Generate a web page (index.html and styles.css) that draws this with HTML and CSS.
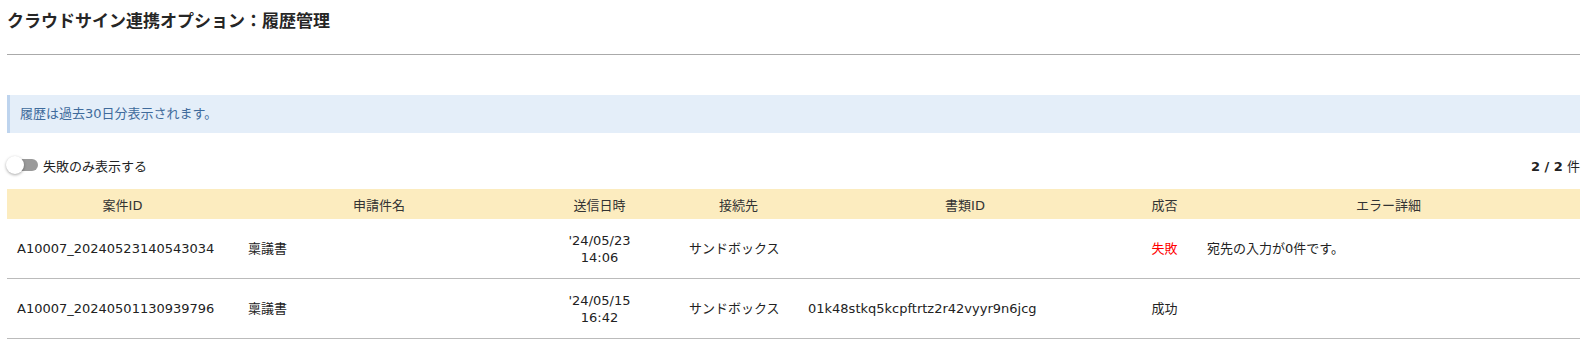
FILE: index.html
```html
<!DOCTYPE html>
<html lang="ja">
<head>
  <meta charset="UTF-8">
  <meta name="viewport" content="width=device-width, initial-scale=1.0">
  <title>履歴管理</title>
  <link rel="stylesheet" href="styles.css">
</head>
<body>
  <h1 class="page-title">クラウドサイン連携オプション：履歴管理</h1>
  <hr class="title-rule">

  <div class="info">履歴は過去30日分表示されます。</div>

  <div class="toolbar">
    <label class="toggle">
      <span class="switch"><span class="knob"></span></span>
      失敗のみ表示する
    </label>
    <div class="count"><b>2 / 2</b> 件</div>
  </div>

  <div class="history">
    <div class="head">
      <div>案件ID</div>
      <div>申請件名</div>
      <div>送信日時</div>
      <div>接続先</div>
      <div>書類ID</div>
      <div>成否</div>
      <div>エラー詳細</div>
    </div>
    <div class="row">
      <div>A10007_20240523140543034</div>
      <div>稟議書</div>
      <div class="center">'24/05/23<br>14:06</div>
      <div>サンドボックス</div>
      <div></div>
      <div class="center fail">失敗</div>
      <div>宛先の入力が0件です。</div>
    </div>
    <div class="row">
      <div>A10007_20240501130939796</div>
      <div>稟議書</div>
      <div class="center">'24/05/15<br>16:42</div>
      <div>サンドボックス</div>
      <div>01k48stkq5kcpftrtz2r42vyyr9n6jcg</div>
      <div class="center">成功</div>
      <div></div>
    </div>
  </div>
</body>
</html>
```

FILE: styles.css
```css
body {
  margin: 0;
  padding: 10px 11px 0 7px;
  font-family: "DejaVu Sans", "Noto Sans CJK JP", sans-serif;
  font-size: 13px;
  color: #222;
  background: #fff;
}
.page-title {
  margin: 0;
  font-size: 17px;
  line-height: 22px;
  font-weight: bold;
  color: #262626;
}
.title-rule {
  margin: 22px 0 0;
  border: 0;
  border-top: 1px solid #aaa;
}
.info {
  margin-top: 40px;
  height: 38px;
  line-height: 38px;
  padding-left: 10px;
  background: #e4eef9;
  border-left: 3px solid #bed4ee;
  color: #3f6b9c;
}
.toolbar {
  display: flex;
  justify-content: space-between;
  align-items: center;
  height: 24px;
  margin-top: 20px;
}
.toggle {
  display: flex;
  align-items: center;
  gap: 5px;
}
.switch {
  position: relative;
  width: 31px;
  height: 12px;
  border-radius: 6px;
  background: #9a9a9a;
}
.knob {
  position: absolute;
  left: -1px;
  top: -3px;
  width: 18px;
  height: 18px;
  border-radius: 50%;
  background: #fff;
  box-shadow: 0 1px 3px rgba(0,0,0,0.35);
}
.count b {
  font-weight: bold;
}
.history {
  margin-top: 12px;
}
.head, .row {
  display: grid;
  grid-template-columns: 231px 282px 159px 119px 334px 65px 1fr;
  align-items: center;
}
.head {
  height: 30px;
  background: #fcecbf;
  color: #333;
  text-align: center;
}
.row {
  height: 59px;
  border-bottom: 1px solid #bbb;
  line-height: 17px;
}
.row > div {
  padding-left: 10px;
}
.row > .center {
  padding-left: 0;
  text-align: center;
}
.fail {
  color: #f00;
}
```
